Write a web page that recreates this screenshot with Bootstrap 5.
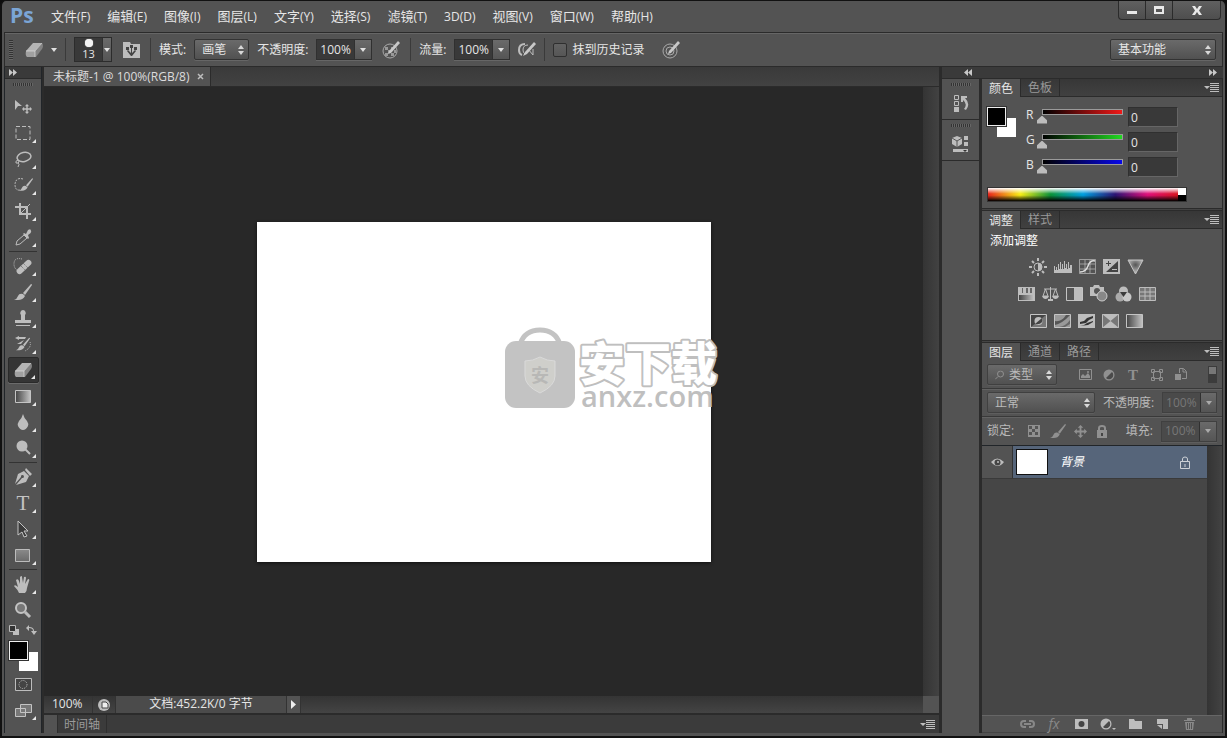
<!DOCTYPE html>
<html lang="zh-CN">
<head>
<meta charset="utf-8">
<meta name="viewport" content="width=device-width, initial-scale=1">
<title>未标题-1 @ 100%(RGB/8)</title>
<link href="https://cdn.jsdelivr.net/npm/bootstrap@5.3.0/dist/css/bootstrap.min.css" rel="stylesheet">
<style>
:root{--face:#535353;--line:#2b2b2b;--hi:#666;--ink:#e6e6e6;--icon:#bdbdbd}
*{border-radius:0}
body{background:#0d0d0d;color:var(--ink);font:12px/16px "Open Sans","Noto Sans CJK SC",sans-serif;overflow:hidden}
button,input,select{font:inherit;color:inherit}
button{background:none;border:0;padding:0}
svg{display:block;fill:var(--icon);flex:none}
.line-art{fill:none;stroke:var(--icon)}
.app-window{height:100vh;background:var(--face);border:solid #111;border-width:1px 2px 2px;border-radius:6px 6px 0 0;padding:0 2px 3px 2px}
.titlebar{height:31px}
.logo-text{font:700 21px/28px "Open Sans",sans-serif;color:#7ba5d6;width:43px;padding-left:6px}
.menu-link{font-size:13px;line-height:30px;color:var(--ink);text-decoration:none;margin-right:17px}
.menu-link small{font-size:12px}
.win-btns{margin-right:2px;border:1px solid var(--line);border-top:0;border-radius:0 0 4px 4px;background:linear-gradient(#606060,#4e4e4e);height:19px}
.win-btns button{width:27px;border-right:1px solid var(--line)}
.win-btns button:last-child{width:47px;border:0}
.win-btns svg{margin:auto;fill:#e8e8e8}
.options{height:35px;border:1px solid var(--line);box-shadow:inset 0 1px var(--hi);padding-left:4px;padding-right:6px}
.grip-v{width:4px;height:20px;background:repeating-linear-gradient(#333 0 1px,#666 1px 2px)}
.grip-h{width:20px;height:3px;background:repeating-linear-gradient(90deg,#333 0 1px,#666 1px 2px)}
.vsep{width:1px;height:23px;margin:0 8px;background:#3a3a3a}
.opt-label{padding-right:8px;white-space:nowrap}
.icon-btn{width:22px;height:24px;display:flex;align-items:center;justify-content:center}
.caret{width:0;height:0;border:3px solid transparent;border-top:4px solid #e0e0e0;border-bottom:0}
.pick{appearance:none;border:1px solid #333;border-radius:2px;box-shadow:0 1px #666;height:21px;line-height:19px;padding:0 0 0 7px;
 background:url("data:image/svg+xml,%3Csvg xmlns='http://www.w3.org/2000/svg' width='6' height='10' fill='%23d8d8d8'%3E%3Cpath d='M0 4L3 0L6 4zM0 6L3 10L6 6z'/%3E%3C/svg%3E") no-repeat right 4px center,linear-gradient(#6a6a6a,#515151)}
.combo{border:1px solid #303030;box-shadow:0 1px #666;height:21px;width:56px;display:flex}
.combo input{width:37px;min-width:0;border:0;padding:0 0 0 3px;background:#393939;line-height:18px;outline:0}
.combo button,.brush-box button{flex:1;background:linear-gradient(#6a6a6a,#555);border-left:1px solid #303030;display:flex;align-items:center;justify-content:center}
.brush-box{width:38px;height:25px;border:1px solid #2c2c2c;background:#393939;font-size:11px;line-height:12px}
.brush-box .tip{width:27px;text-align:center}
.brush-box i{display:block;width:8px;height:8px;margin:1px auto;border-radius:50%;background:#f2f2f2;box-shadow:0 0 1px #fff}
.tick{appearance:none;width:14px;height:14px;border:1px solid #2f2f2f;border-radius:2px;background:linear-gradient(#626262,#565656);margin:0 5px 0 0}
.dock-head{height:12px;background:#3a3a3a;border-bottom:1px solid var(--line);padding:0 6px;display:flex;align-items:center}
.dock-head svg{fill:#c8c8c8}
.tools{width:38px;border-right:1px solid var(--line)}
.tools .grip-h,.icon-dock .grip-h{margin:4px auto 8px}
.tool{width:31px;height:26px;margin:0 auto;display:flex;align-items:center;justify-content:center;position:relative}
.tool.has-more::after{content:"";position:absolute;right:3px;bottom:3px;border:solid transparent;border-width:2px;border-right-color:#e8e8e8;border-bottom-color:#e8e8e8}
.tool.active{background:#353535;border:1px solid #2a2a2a;border-radius:2px;box-shadow:0 1px #6b6b6b}
.tools hr{margin:1px 4px;border:0;border-top:1px solid #333;opacity:1}
.mini-row{padding:2px 4px 6px}
.swatches{position:relative;width:29px;height:30px}
.swatches button{position:absolute;width:19px;height:19px;right:0;bottom:0;background:#fff}
.swatches button+button{left:0;top:0;background:#000;border:1px solid #eee;outline:1px solid #333}
.doc-col{border:solid var(--line);border-width:0 2px 0 2px}
.tabstrip{background:linear-gradient(#3a3a3a,#424242);height:20px;border-bottom:1px solid var(--line)}
.doc-tab{background:var(--face);border-right:1px solid var(--line);padding:0 6px 0 9px;line-height:20px;color:#dcdcdc}
.stage{background:#282828}
.vscroll{width:16px;background:linear-gradient(90deg,#343434,#424242)}
.paper{position:relative;width:454px;height:340px;background:#fff;box-shadow:0 1px 3px #111}
.watermark{position:absolute;left:246px;top:104px;overflow:visible}
.watermark text{font-family:"Open Sans","Noto Sans CJK SC",sans-serif}
.status{height:17px;line-height:16px;background:linear-gradient(#343434,#444)}
.status>*{border-right:1px solid #333}
.time-tabs{height:20px;background:#3b3b3b;border-top:2px solid var(--line)}
.time-tabs .nub{width:13px;background:var(--face)}
.time-tabs .tab{padding:0 6px;color:#9a9a9a;border:solid #2e2e2e;border-width:0 1px;line-height:17px}
.side{border-left:1px solid var(--line)}
.icon-dock{width:38px;border-right:1px solid var(--line)}
.icon-dock section{height:41px;border-bottom:1px solid var(--line)}
.icon-dock button{display:block;margin:0 auto}
.panels{width:243px;border:solid var(--line);border-width:0 1px 1px 2px}
.panel{border-bottom:1px solid var(--line);box-shadow:0 1px #444}
.panel+.panel{margin-top:1px;border-top:1px solid var(--line)}
.tabs{height:18px;background:linear-gradient(#373737,#414141);display:flex}
.tabs .tab{padding:0 7px;color:#999;line-height:17px;border-right:1px solid var(--line);border-bottom:1px solid var(--line)}
.tabs .tab.active{background:var(--face);color:#e6e6e6;border-bottom:0}
.tabs .fill{flex:1;border-bottom:1px solid var(--line);display:flex;justify-content:flex-end;padding-right:3px}
.fly{display:flex;align-items:center}
.color-body{padding:10px 0 5px 5px;gap:10px}
.chan{display:grid;grid-template-columns:11px 91px 50px;height:20px;margin-bottom:5px;align-items:start}
.chan input[type=range]{appearance:none;width:100%;height:16px;margin:2px 0 0;
 background:linear-gradient(90deg,#000,var(--c)) 6px 1px/calc(100% - 12px) 4px no-repeat,linear-gradient(#9a9a9a,#9a9a9a) 5px 0/calc(100% - 10px) 6px no-repeat}
.chan input::-webkit-slider-thumb{appearance:none;width:10px;height:8px;margin-top:5px;background:#bcbcbc;clip-path:polygon(50% 0,100% 60%,100% 100%,0 100%,0 60%)}
.chan input[type=text]{border:1px solid #303030;border-right-color:#666;border-bottom-color:#666;background:#393939;height:20px;padding:0 2px;width:50px}
.spectrum{width:200px;height:15px;border:1px solid #333;display:flex;margin-left:5px}
.spectrum .hues{flex:1;background:linear-gradient(#fff 0,#fff0 45%,#0000 55%,#000 100%),linear-gradient(90deg,#e8251c,#f7ee16 17%,#0a9339 33%,#009fe0 50%,#2c1373 67%,#e0107a 84%,#d9141e)}
.spectrum .bw{width:8px;background:linear-gradient(#fff 50%,#000 50%)}
.adj-row{display:flex;justify-content:center;gap:7px;height:27px;align-items:center;padding-right:31px}
.lrow{border-bottom:1px solid #393939;box-shadow:0 1px #626262;height:28px;padding:0 5px;color:#b9b9b9;display:flex;align-items:center}
.lrow .pick,.lrow .combo{border-color:#404040;box-shadow:0 1px #5e5e5e}
.lrow .pick{color:#bbb}
.lrow .combo input{background:#4a4a4a;color:#777}
.lrow svg{fill:#909090}
.lrow .line-art{fill:none;stroke:#909090}
.lrow .caret{border-top-color:#aaa}
.lrow .icon-btn{width:24px}
.layers{background:#464646}
.layer{height:33px;border-bottom:1px solid #3a3a3a;background:#56657a}
.layer .eye{width:31px;background:var(--face);border-right:1px solid #333}
.layer .thumb{width:32px;height:26px;background:#fff;border:1px solid #111;margin:0 12px 0 3px}
.foot{height:17px;border-top:1px solid #666;justify-content:flex-end;padding-right:22px;gap:5px}
</style>
</head>
<body>
<svg width="0" height="0" class="position-absolute">
 <defs>
  <linearGradient id="lr"><stop stop-color="#444"/><stop offset="1" stop-color="#c4c4c4"/></linearGradient>
  <linearGradient id="tb" x2="0" y2="1"><stop stop-color="#8a8a8a"/><stop offset="1" stop-color="#6a6a6a"/></linearGradient>
  <radialGradient id="glow" cy=".35"><stop stop-color="#555"/><stop offset="1" stop-color="#b0b0b0"/></radialGradient>
  <symbol id="menu-lines" viewBox="0 0 15 9"><path d="M0 3h6L3 6zM6 0h9v1H6zM6 2h9v1H6zM6 4h9v1H6zM6 6h9v1H6zM6 8h9v1H6z"/></symbol>
  <symbol id="eraser" viewBox="0 0 18 14"><path d="M8 0h9l-7 8H1z" fill="#b4b4b4"/><path d="M1 8h9v6H2q-2-2-1-6z" fill="#a0a0a0"/><path d="M10 8l7-8q2 3 0 6l-6 8h-1z" fill="#828282"/><path d="M1 8h9l7-8M10 8v6" fill="none" stroke="#dcdcdc" stroke-width=".7"/></symbol>
  <symbol id="brush" viewBox="0 0 18 16"><path d="M17 0q1 0 1 1l-7 10-2-2zM9 10l2 2q-2 4-7 4H0q3-1 4-4t5-2z"/></symbol>
  <symbol id="lock" viewBox="0 0 12 13"><path d="M1 5h10v8H1z"/><path d="M3 5V3q0-2 3-2t3 2v2" fill="none" stroke="#909090" stroke-width="2"/><path d="M5 8h2v3H5z" fill="#444"/></symbol>
  <symbol id="move4" viewBox="0 0 14 14"><path d="M7 0l3 3H8v3h3V4l3 3-3 3V8H8v3h2l-3 3-3-3h2V8H3v2L0 7l3-3v2h3V3H4z"/></symbol>
  <symbol id="half" viewBox="0 0 12 12"><circle cx="6" cy="6" r="5.5"/><path d="M9 3L3 9a4 4 0 0 0 6-6z" fill="#4a4a4a"/></symbol>
 </defs>
</svg>
<div class="app-window d-flex flex-column">
 <header class="titlebar d-flex">
  <div class="logo-text">Ps</div>
  <nav class="d-flex flex-grow-1 ms-1">
   <a class="menu-link" href="#">文件<small>(F)</small></a><a class="menu-link" href="#">编辑<small>(E)</small></a><a class="menu-link" href="#">图像<small>(I)</small></a><a class="menu-link" href="#">图层<small>(L)</small></a><a class="menu-link" href="#">文字<small>(Y)</small></a><a class="menu-link" href="#">选择<small>(S)</small></a><a class="menu-link" href="#">滤镜<small>(T)</small></a><a class="menu-link" href="#"><small>3D(D)</small></a><a class="menu-link" href="#">视图<small>(V)</small></a><a class="menu-link" href="#">窗口<small>(W)</small></a><a class="menu-link" href="#">帮助<small>(H)</small></a>
  </nav>
  <div class="win-btns d-flex">
   <button aria-label="最小化"><svg width="10" height="10"><path d="M0 6h10v3H0z"/></svg></button>
   <button aria-label="最大化"><svg width="10" height="8"><path fill-rule="evenodd" d="M0 0h10v8H0zM2 3h6v3H2z"/></svg></button>
   <button aria-label="关闭"><svg width="10" height="9"><path d="M0 0h3l2 3 2-3h3L7 4.500l3 4.500H7L5 6 3 9H0l3-4.500z"/></svg></button>
  </div>
 </header>

 <div class="options d-flex align-items-center">
  <div class="grip-v me-1"></div>
  <button class="d-flex align-items-center justify-content-end gap-2 ps-2" aria-label="橡皮擦"><svg width="18" height="14"><use href="#eraser"/></svg><span class="caret"></span></button>
  <div class="vsep"></div>
  <div class="brush-box d-flex"><div class="tip"><i></i>13</div><button aria-label="画笔预设"><span class="caret"></span></button></div>
  <button class="icon-btn ms-2" aria-label="画笔面板"><svg width="17" height="16"><path d="M0 0h7l1 2h9v14H0z"/><path d="M8 14l-4-5 1-1 3 3V6h1v5l3-3 1 1-4 5zM3 5h3v3H3zM7 3h3v3H7zM11 5h3v3h-3z" fill="#444"/></svg></button>
  <div class="vsep"></div>
  <label class="opt-label" for="mode">模式:</label>
  <select class="pick me-2" id="mode" style="width:55px"><option>画笔</option></select>
  <label class="opt-label" for="opac">不透明度:</label>
  <div class="combo"><input id="opac" value="100%"><button aria-label="不透明度滑块"><span class="caret"></span></button></div>
  <button class="icon-btn ms-2" aria-label="压力不透明度"><svg width="18" height="18"><circle cx="8" cy="10" r="7" fill="none" stroke="#aaa"/><path d="M3 6h3v3H3zM9 6h2v3H9zM6 9h3v3H6zM3 12h3v3H3zM9 12h3v3H9zM12 9h2v3h-2z" fill="#999"/><path d="M16 0l2 2-9 10-3 1 1-3z" fill="#c8c8c8"/></svg></button>
  <div class="vsep"></div>
  <label class="opt-label" for="flow">流量:</label>
  <div class="combo"><input id="flow" value="100%"><button aria-label="流量滑块"><span class="caret"></span></button></div>
  <button class="icon-btn ms-1 ps-1" aria-label="喷枪"><svg width="18" height="16"><path class="line-art" stroke-width="2" d="M7 2Q1 2 1 8q0 4 3 5"/><path class="line-art" d="M10 3Q5 3 5 8q0 3 2 4M10 7l5 6V7"/><path d="M16 0l2 2-9 10-4 2 2-4z" fill="#c8c8c8"/></svg></button>
  <div class="vsep"></div>
  <input class="tick" type="checkbox" id="hist"><label for="hist">抹到历史记录</label>
  <button class="icon-btn ms-3" aria-label="压力大小"><svg width="18" height="18"><circle cx="8" cy="10" r="7" fill="none" stroke="#aaa"/><circle cx="8" cy="10" r="4" fill="none" stroke="#aaa"/><path d="M16 0l2 2-9 10-3 1 1-3z" fill="#c8c8c8"/></svg></button>
  <select class="pick ms-auto" aria-label="工作区" style="width:106px"><option>基本功能</option></select>
 </div>

 <main class="d-flex flex-grow-1" style="min-height:0">
  <aside class="tools border-start border-dark d-flex flex-column">
   <div class="dock-head ps-1"><svg width="8" height="7"><path d="M0 0l4 3.500L0 7zM4 0l4 3.500L4 7z"/></svg></div>
   <div class="grip-h"></div>
   <button class="tool" aria-label="移动"><svg width="18" height="15"><path d="M1 0l7 6-4 0-3 4z"/><svg x="8" y="4" width="10" height="10"><use href="#move4"/></svg></svg></button>
   <button class="tool has-more" aria-label="矩形选框"><svg class="line-art" width="16" height="16"><path stroke-dasharray="4 2" d="M1 1.500h14v13H1z"/></svg></button>
   <button class="tool has-more" aria-label="套索"><svg class="line-art" width="18" height="16"><ellipse cx="10" cy="6" rx="7" ry="4.500" stroke-width="1.500" transform="rotate(-12 10 6)"/><path d="M4 9q-3 1-2 3 3 1 3-2M4 12q2 1 0 4"/></svg></button>
   <button class="tool has-more" aria-label="快速选择"><svg width="19" height="16"><path class="line-art" stroke-dasharray="2 1" d="M9 2Q2 0 1 7q0 7 5 6"/><svg x="5" y="1" width="14" height="13"><use href="#brush"/></svg></svg></button>
   <button class="tool has-more" aria-label="裁剪"><svg class="line-art" width="17" height="16"><path stroke-width="2" d="M5 0v11h11M0 4h12v12"/><path d="M5 11L15 1"/></svg></button>
   <button class="tool has-more" aria-label="吸管"><svg width="17" height="17"><path d="M9 4l2 1 2-4q3-2 3 1 1 2-3 4l1 3-1 1-5-5z"/><path class="line-art" d="M9 6l3 3-7 6-4 1 1-4z"/></svg></button>
   <hr>
   <button class="tool has-more" aria-label="修复画笔"><svg width="20" height="18"><path class="line-art" stroke-dasharray="1 1" d="M9 2Q1 0 1 7q0 4 3 6"/><rect x="2" y="7" width="18" height="6" rx="3" transform="rotate(-43 11 10)"/><path d="M8 9l4 4M10 6l5 5" stroke="#666" stroke-dasharray="1 1"/></svg></button>
   <button class="tool has-more" aria-label="画笔"><svg width="18" height="16"><use href="#brush"/></svg></button>
   <button class="tool has-more" aria-label="图章"><svg width="16" height="17"><path d="M8 0a3 3 0 0 1 2 5v5h6v3H0v-3h6V5a3 3 0 0 1 2-5zM1 15h14v1H1z"/></svg></button>
   <button class="tool has-more" aria-label="历史画笔"><svg width="18" height="16"><path d="M1 2l4-2v1h7l-1 2H5v1zM10 4L3 8h4z"/><svg x="2" y="1" width="14" height="14"><use href="#brush"/></svg><path class="line-art" stroke-dasharray="1 1" d="M16 6q2 5-5 9"/></svg></button>
   <button class="tool has-more active" aria-label="橡皮擦"><svg width="18" height="14"><use href="#eraser"/></svg></button>
   <button class="tool has-more" aria-label="渐变"><svg width="16" height="13"><path d="M.5.5h15v12H.5z" style="fill:url(#lr);stroke:#c4c4c4"/></svg></button>
   <button class="tool has-more" aria-label="模糊"><svg width="12" height="16"><path d="M6 0q1 4 4 7 2 3 1 5-2 4-5 4t-5-4q-1-2 1-5 3-3 4-7z"/></svg></button>
   <button class="tool has-more" aria-label="减淡"><svg width="15" height="16"><circle cx="6" cy="6" r="5.500"/><path class="line-art" stroke-width="2" d="M9 9l5 5"/></svg></button>
   <hr>
   <button class="tool has-more" aria-label="钢笔"><svg width="18" height="18"><path d="M12 0l6 6-2 2-5-6zM10 3l5 5-3 6-10 3 6-7a1.500 1.500 0 1 0-1-1L1 16 4 6z"/></svg></button>
   <button class="tool has-more" aria-label="文字" style="font:21px/24px 'Liberation Serif',serif;color:#c4c4c4">T</button>
   <button class="tool has-more" aria-label="路径选择"><svg width="12" height="18"><path d="M1 1l10 10H7l3 5-3 1-2-5-4 3z" style="fill:#3b3b3b;stroke:#c4c4c4"/></svg></button>
   <button class="tool has-more" aria-label="矩形"><svg width="16" height="13"><path d="M.5.5h14v12H.5z" style="fill:url(#tb);stroke:#bcbcbc"/></svg></button>
   <hr>
   <button class="tool has-more" aria-label="抓手"><svg width="18" height="17"><path d="M5 17q-1-3-5-7 1-2 4 1L2 4q2-2 3 1l1 3V1q2-2 2 0l1 6 1-6q2-1 2 1l-1 6 3-5q2 0 1 2l-2 7q0 3-2 5z"/></svg></button>
   <button class="tool" aria-label="缩放"><svg width="17" height="17"><circle cx="6" cy="6" r="5" style="fill:#777;stroke:#c4c4c4;stroke-width:2"/><path class="line-art" stroke-width="3" d="M10 10l5 5"/></svg></button>
   <div class="mini-row d-flex justify-content-between">
    <button aria-label="默认颜色"><svg width="10" height="10"><path d="M4 4h6v6H4z"/><path d="M.5.5h6v6h-6z" fill="#333" stroke="#bbb"/></svg></button>
    <button aria-label="切换颜色"><svg width="11" height="10"><path d="M0 3l3-3v2q5 0 5 4h3l-3 4-3-4h2q0-3-4-3v3z"/></svg></button>
   </div>
   <div class="swatches ms-1"><button aria-label="背景色"></button><button aria-label="前景色"></button></div>
   <button class="tool" aria-label="快速蒙版"><svg class="line-art" width="17" height="13"><path d="M.5.5h16v12H.5z" fill="#444"/><circle cx="8" cy="6.500" r="4" stroke-dasharray="1 1"/></svg></button>
   <button class="tool has-more" aria-label="屏幕模式"><svg width="17" height="13"><path d="M.5 4.500h10v8H.5zM5.500.5h11v8h-11z" style="fill:#777;stroke:#c4c4c4"/></svg></button>
  </aside>

  <section class="doc-col d-flex flex-column flex-grow-1" style="min-width:0">
   <div class="tabstrip d-flex"><div class="doc-tab d-flex">未标题-1 @ 100%(RGB/8)<button class="ms-2" aria-label="关闭文档"><svg class="line-art" width="7" height="7"><path stroke-width="1.500" d="M1 1l5 5M6 1L1 6"/></svg></button></div></div>
   <div class="d-flex flex-grow-1">
    <div class="stage flex-grow-1 d-flex align-items-center justify-content-center">
     <div class="paper">
      <svg class="watermark" width="216" height="84" viewBox="0 0 216 84">
       <path d="M17 18Q22 4 37 4t20 14" fill="none" stroke="#c3c3c3" stroke-width="5"/>
       <rect x="2" y="15" width="70" height="67" rx="11" fill="#c3c3c3"/>
       <path d="M37 31q7 4 15 4v15q0 10-15 17Q22 60 22 50V35q8 0 15-4z" fill="#cfcfcb" stroke="#dadada"/>
       <text x="28" y="56" font-size="18" font-weight="700" fill="#b8b8b6">安</text>
       <text x="76" y="54" font-size="46" font-weight="900" fill="#fff" stroke="#bfbfbf" stroke-width="4" stroke-linejoin="round" paint-order="stroke">安下载</text>
       <text x="78" y="81" font-size="29" font-weight="600" fill="#bfbfbf">anxz.com</text>
      </svg>
     </div>
    </div>
    <div class="vscroll"></div>
   </div>
   <div class="status d-flex">
    <span class="ps-2" style="width:49px">100%</span>
    <button class="bg-transparent px-1" aria-label="状态"><svg width="14" height="14"><circle cx="7" cy="7" r="6"/><path d="M5 4h4l2 2v4H5z" fill="#eee" stroke="#444"/></svg></button>
    <span class="text-center" style="width:171px;background:#4b4b4b">文档:452.2K/0 字节</span>
    <button class="px-1" style="background:var(--face)" aria-label="更多信息"><svg width="5" height="9"><path d="M0 0l5 4.500L0 9z" fill="#eee"/></svg></button>
    <div class="ms-auto border-0" style="width:16px;background:var(--face)"></div>
   </div>
   <div class="time-tabs d-flex"><div class="nub"></div><button class="tab">时间轴</button><button class="fly ms-auto pe-1" aria-label="面板菜单"><svg width="15" height="9"><use href="#menu-lines"/></svg></button></div>
  </section>

  <aside class="side d-flex flex-column">
   <div class="dock-head justify-content-between"><svg class="ms-3" width="8" height="7"><path d="M4 0L0 3.500 4 7zM8 0L4 3.500 8 7z"/></svg><svg width="8" height="7"><path d="M0 0l4 3.500L0 7zM4 0l4 3.500L4 7z"/></svg></div>
   <div class="d-flex flex-grow-1">
    <div class="icon-dock">
     <section class="pt-1"><div class="grip-h mt-0"></div><button aria-label="历史记录"><svg width="16" height="18"><path class="line-art" d="M1.500 1.500h4v4h-4zM1.500 7.500h4v4h-4z"/><path d="M1 13h5v5H1zM8 2h6v2h-2q6 6 1 12l-2-1q4-5-1-9v2H8z"/></svg></button></section>
     <section class="pt-1"><div class="grip-h mt-0"></div><button aria-label="属性"><svg width="17" height="18"><path d="M5 1l5 2v6l-5 3-5-3V3z"/><path class="line-art" style="stroke:#555" d="M0 3l5 3 5-3M5 6v6"/><path d="M12 1h4v4h-4zM12 7h4v4h-4zM1 14h15v3H1z"/><path d="M11 15h4l-2 2z" fill="#333"/></svg></button></section>
    </div>
    <div class="panels d-flex flex-column">
     <section class="panel" style="height:130px">
      <div class="tabs"><button class="tab active">颜色</button><button class="tab">色板</button><div class="fill"><button class="fly" aria-label="面板菜单"><svg width="15" height="9"><use href="#menu-lines"/></svg></button></div></div>
      <div class="color-body d-flex">
       <div class="swatches"><button aria-label="背景色"></button><button aria-label="前景色"></button></div>
       <div>
        <div class="chan" style="--c:#f01818"><label for="r">R</label><input id="r" type="range" value="0"><input type="text" value="0" aria-label="R 值"></div>
        <div class="chan" style="--c:#22d822"><label for="g">G</label><input id="g" type="range" value="0"><input type="text" value="0" aria-label="G 值"></div>
        <div class="chan" style="--c:#0808e8"><label for="b">B</label><input id="b" type="range" value="0"><input type="text" value="0" aria-label="B 值"></div>
       </div>
      </div>
      <div class="spectrum"><div class="hues"></div><div class="bw"></div></div>
     </section>
     <section class="panel" style="height:131px">
      <div class="tabs"><button class="tab active">调整</button><button class="tab">样式</button><div class="fill"><button class="fly" aria-label="面板菜单"><svg width="15" height="9"><use href="#menu-lines"/></svg></button></div></div>
      <div class="ps-2 pt-1 pb-1 text-white">添加调整</div>
      <div class="adj-row">
       <button aria-label="亮度"><svg width="18" height="18"><circle class="line-art" cx="9" cy="9" r="4"/><path d="M9 5a4 4 0 0 1 0 8z"/><path class="line-art" stroke-width="2" d="M9 0v3M9 15v3M0 9h3M15 9h3M3 3l2 2M13 13l2 2M15 3l-2 2M5 13l-2 2"/></svg></button>
       <button aria-label="色阶"><svg width="18" height="12"><path d="M0 12V5h1v4h1V6h1v3h1V3h1v5h1V1h1v7h1V3h1v5h1V0h1v7h1V3h1v5h1V1h1v6h1V4h2v8z"/></svg></button>
       <button aria-label="曲线"><svg class="line-art" width="17" height="15"><path d="M.5.5h16v14H.5zM6 1v13M11 1v13M1 5h15M1 10h15" stroke-opacity=".7"/><path stroke="#ddd" stroke-width="1.500" d="M1 13q6 0 8-6t7-5"/></svg></button>
       <button aria-label="曝光度"><svg width="17" height="15"><path d="M0 0h17v15H0z"/><path d="M15 2v11H3zM3 4h5v1H3zM5 2h1v5H5z" fill="#444"/><path d="M9 10h5v1H9z"/></svg></button>
       <button aria-label="自然饱和度"><svg width="17" height="16"><path d="M1 1h15L8.500 15z" fill="url(#glow)" stroke="#c4c4c4"/></svg></button>
      </div>
      <div class="adj-row">
       <button aria-label="色相"><svg width="17" height="14"><path d="M0 0h17v14H0z"/><path d="M1 8h15v5H1z" fill="url(#lr)"/><path d="M4 1h1v5H4zM8 1h2v5H8zM12 1h2v5h-2z" fill="#666"/></svg></button>
       <button aria-label="色彩平衡"><svg width="17" height="16"><path class="line-art" d="M2 3h13M8.500 1v12M3.500 3L1 10h5zM13.500 3L11 10h5z"/><path d="M0 10h7q-1 3-3.500 3T0 10zM10 10h7q-1 3-3.500 3T10 10zM6 13h5v2H6z"/></svg></button>
       <button aria-label="黑白"><svg width="17" height="14"><path d="M.5.5h16v13H.5z" fill="#555" stroke="#c4c4c4"/><path d="M8 1h8v12H8z"/></svg></button>
       <button aria-label="照片滤镜"><svg width="18" height="17"><path d="M0 2h3l1-2h5l1 2h4v9H0z"/><circle cx="7" cy="6" r="3" fill="#555"/><circle cx="12" cy="11" r="5" fill="#888" stroke="#ccc"/></svg></button>
       <button aria-label="通道混合器"><svg width="17" height="16"><circle cx="8.500" cy="5" r="4.500"/><circle cx="5" cy="11" r="4.500" fill="#aaa"/><circle cx="12" cy="11" r="4.500" fill="#c8c8c8"/><path d="M5 6h7l-3.500 5z" fill="#3c3c3c"/></svg></button>
       <button aria-label="颜色查找"><svg class="line-art" width="17" height="14"><path fill="#777" d="M.5.5h16v13H.5zM6 1v13M11 1v13M1 5h15M1 9h15"/></svg></button>
      </div>
      <div class="adj-row">
       <button aria-label="反相"><svg width="17" height="14"><path d="M.5.5h16v13H.5z" stroke="#c4c4c4" fill="#777"/><path d="M1 13L16 1H1z" fill="#444"/><circle cx="8.500" cy="7" r="4"/><path d="M5 10l7-6q2 7-7 6z" fill="#444"/></svg></button>
       <button aria-label="色调分离"><svg width="17" height="14"><path d="M.5.5h16v13H.5z" stroke="#c4c4c4" fill="#999"/><path d="M1 7Q8 8 12 1h4Q9 9 1 11z" fill="#555"/><path d="M5 13q7-1 11-7v4l-5 3z" fill="#666"/></svg></button>
       <button aria-label="阈值"><svg width="17" height="14"><path d="M0 0h17v14H0z"/><path d="M2 8l4-1 3-3 6-2v2l-4 2-3 3-6 1zM2 12l4-1 3-2 6-2v1l-5 3z" fill="#333"/></svg></button>
       <button aria-label="可选颜色"><svg width="17" height="14"><path d="M0 0h17v14H0z" fill="#777"/><path d="M0 0h17L0 14h17z"/><path class="line-art" d="M.5.5h16v13H.5z"/></svg></button>
       <button aria-label="渐变映射"><svg width="17" height="14"><path d="M.5.5h16v13H.5z" fill="url(#lr)" stroke="#c4c4c4"/></svg></button>
      </div>
     </section>
     <section class="panel border-bottom-0 d-flex flex-column flex-grow-1">
      <div class="tabs"><button class="tab active">图层</button><button class="tab">通道</button><button class="tab">路径</button><div class="fill"><button class="fly" aria-label="面板菜单"><svg width="15" height="9"><use href="#menu-lines"/></svg></button></div></div>
      <div class="lrow">
       <div class="position-relative"><select class="pick" aria-label="筛选类型" style="width:70px;padding-left:21px"><option>类型</option></select>
        <svg class="line-art position-absolute top-50 start-0 translate-middle-y ms-2" width="9" height="9"><circle cx="5.500" cy="3.500" r="3"/><path d="M3 6L0 9"/></svg></div>
       <button class="icon-btn ms-3" aria-label="像素图层"><svg width="13" height="11"><path class="line-art" d="M.5.5h12v10H.5z"/><path d="M2 9V7l2-2 2 2 3-3 2 3v2z"/><circle cx="9" cy="3" r="1"/></svg></button>
       <button class="icon-btn" aria-label="调整图层"><svg width="12" height="12"><use href="#half"/></svg></button>
       <button class="icon-btn" aria-label="文字图层" style="font:700 15px/20px 'Liberation Serif',serif;color:#909090">T</button>
       <button class="icon-btn" aria-label="形状图层"><svg class="line-art" width="12" height="12"><path d="M2.500 2.500h7v7h-7zM.5.5h3v3h-3zM8.500.5h3v3h-3zM.5 8.500h3v3h-3zM8.500 8.500h3v3h-3z"/></svg></button>
       <button class="icon-btn" aria-label="智能对象"><svg width="12" height="13"><path class="line-art" d="M4.500 5V.5h4l3 3v7H7M8 1v3h3"/><path d="M0 6h6v6H0z"/></svg></button>
       <button class="ms-auto" aria-label="筛选开关"><svg width="9" height="17"><path d="M0 0h9v17H0z" style="fill:#3c3c3c"/><path d="M1 1h7v7H1z" style="fill:#777"/></svg></button>
      </div>
      <div class="lrow">
       <select class="pick" aria-label="混合模式" style="width:110px"><option>正常</option></select>
       <label class="opt-label ms-2" for="lop">不透明度:</label>
       <div class="combo ms-auto"><input id="lop" value="100%" disabled><button aria-label="不透明度滑块"><span class="caret"></span></button></div>
      </div>
      <div class="lrow border-0 shadow-none">
       <span>锁定:</span>
       <button class="icon-btn ms-2" aria-label="锁定透明像素"><svg width="12" height="12"><path d="M0 0h12v12H0z"/><path d="M1 1h3v3H1zM7 1h3v3H7zM4 4h3v3H4zM1 7h3v3H1zM7 7h3v3H7z" fill="#555"/></svg></button>
       <button class="icon-btn" aria-label="锁定图像像素"><svg width="16" height="14"><use href="#brush"/></svg></button>
       <button class="icon-btn" style="width:20px" aria-label="锁定位置"><svg width="13" height="13"><use href="#move4"/></svg></button>
       <button class="icon-btn" aria-label="全部锁定"><svg width="12" height="13"><use href="#lock"/></svg></button>
       <label class="opt-label ms-auto" for="fillv">填充:</label>
       <div class="combo"><input id="fillv" value="100%" disabled><button aria-label="填充滑块"><span class="caret"></span></button></div>
      </div>
      <div class="d-flex flex-grow-1 layers border-top border-dark">
       <ul class="list-unstyled m-0 flex-grow-1">
        <li class="layer d-flex align-items-center">
         <button class="eye align-self-stretch d-flex align-items-center justify-content-center" aria-label="可见性"><svg width="13" height="9"><path d="M0 4q6-7 13 0-6 8-13 0z"/><circle cx="6.500" cy="4.500" r="3" fill="#444"/><circle cx="7" cy="4" r="1"/></svg></button>
         <span class="thumb"></span><em class="text-white flex-grow-1">背景</em>
         <svg class="me-3" width="12" height="13"><path class="line-art" style="stroke:#ccd0d6" d="M1.500 5.500h9v7h-9zM3.500 5V3q0-2 2.500-2t2.500 2v2M6 8v3"/></svg>
        </li>
       </ul>
       <div class="vscroll" style="width:15px"></div>
      </div>
      <div class="foot d-flex">
       <button class="icon-btn h-100" aria-label="链接"><svg class="line-art" width="15" height="8" style="stroke:#888"><path stroke-width="2" d="M6 1H4Q1 1 1 4t3 3h2M9 1h2q3 0 3 3t-3 3H9M4 4h7"/></svg></button>
       <button class="icon-btn h-100 fst-italic" aria-label="图层样式" style="font-size:14px;color:#888">fx</button>
       <button class="icon-btn h-100" aria-label="添加蒙版"><svg width="13" height="10"><path d="M0 0h13v10H0z"/><circle cx="6.500" cy="5" r="3" fill="#444"/></svg></button>
       <button class="icon-btn h-100" aria-label="新建调整"><svg width="16" height="13"><svg width="12" height="12"><use href="#half"/></svg><path d="M12 10h4l-2 2z"/></svg></button>
       <button class="icon-btn h-100" aria-label="新建组"><svg width="13" height="10"><path d="M0 0h5l1 2h7v8H0z"/></svg></button>
       <button class="icon-btn h-100" aria-label="新建图层"><svg width="11" height="10"><path d="M0 0h11v10H6V5H0z"/><path d="M0 6h5v4z"/></svg></button>
       <button class="icon-btn h-100" aria-label="删除"><svg width="11" height="12"><path d="M0 2h3V0h5v2h3v1H0zM1 4h9l-1 8H2z" fill="#888"/><path d="M3.500 5v6M5.500 5v6M7.500 5v6" stroke="#535353"/></svg></button>
      </div>
     </section>
    </div>
   </div>
  </aside>
 </main>
</div>
<script src="https://cdn.jsdelivr.net/npm/bootstrap@5.3.0/dist/js/bootstrap.bundle.min.js"></script>
</body>
</html>
